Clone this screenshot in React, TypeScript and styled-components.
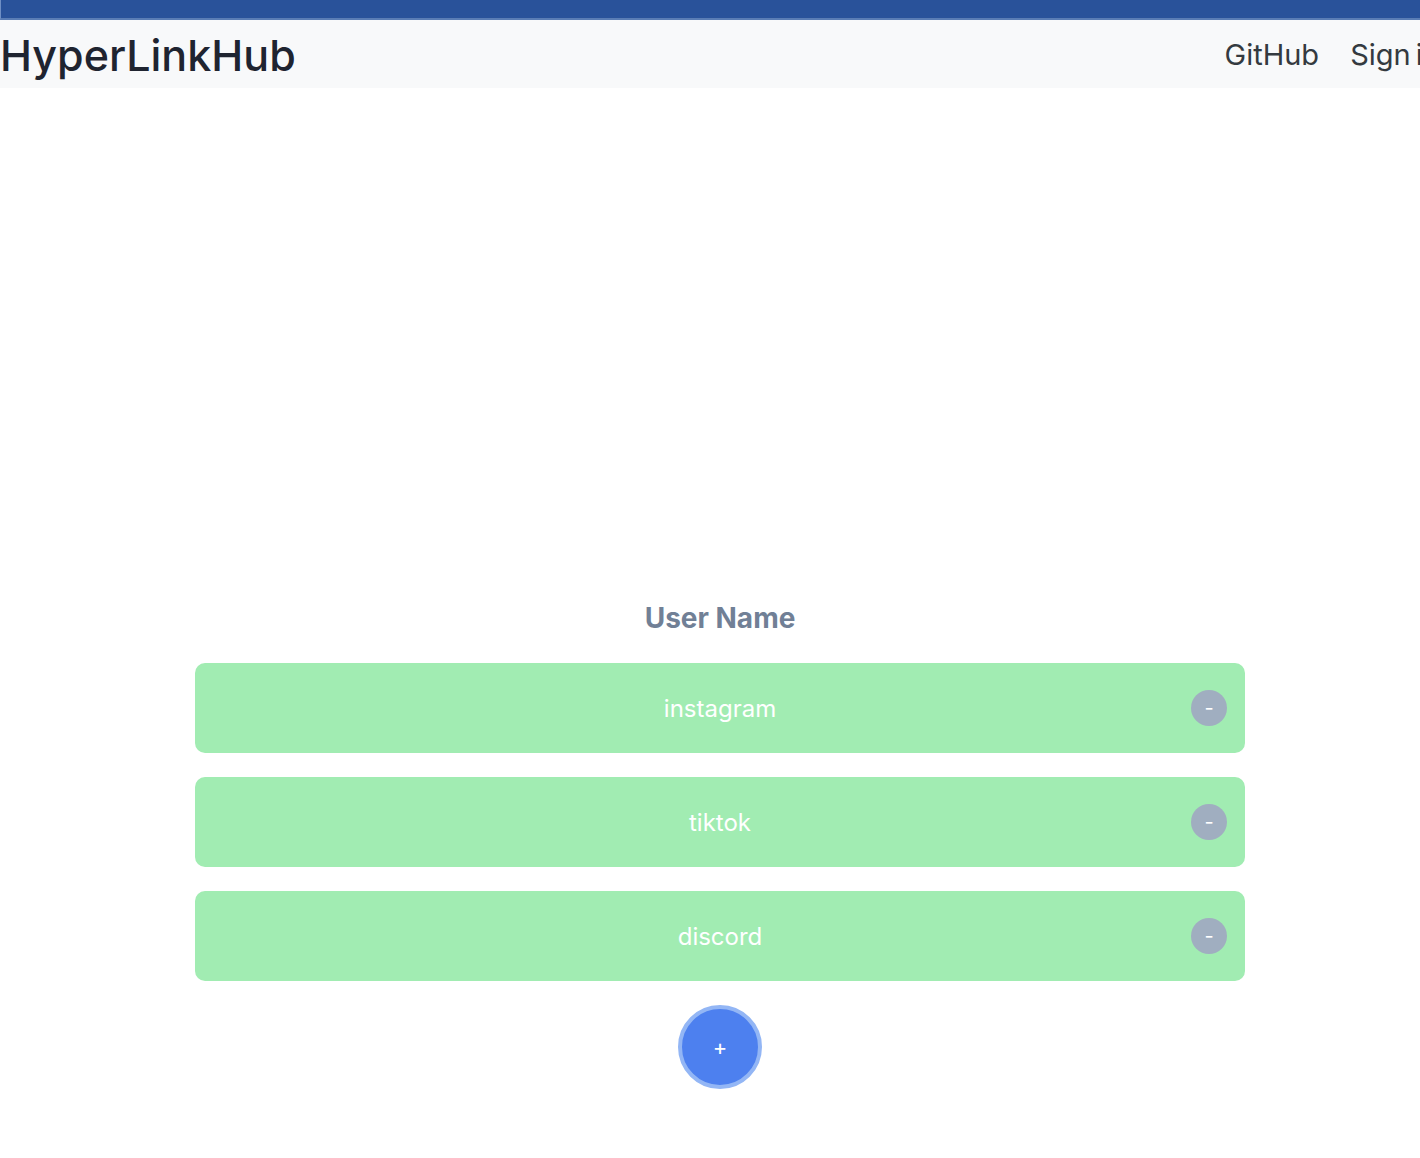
import React from "react";
import styled, { createGlobalStyle } from "styled-components";

const GlobalStyle = createGlobalStyle`
  html, body {
    margin: 0;
    padding: 0;
    background: #ffffff;
    overflow-x: hidden;
  }
  body {
    font-family: Inter, "Noto Sans", "Liberation Sans", sans-serif;
  }
  * { box-sizing: border-box; }
`;

const Page = styled.div`
  width: 1440px;
  min-height: 1158px;
  display: flex;
  flex-direction: column;
`;

const TopStrip = styled.div`
  height: 20px;
  background: #29529a;
  border-bottom: 2px solid #5a7db5;
  border-left: 1px solid #6f8fc4;
`;

const NavBar = styled.nav`
  height: 68px;
  background: #f8f9fa;
  display: flex;
  align-items: center;
  justify-content: space-between;
`;

const Brand = styled.a`
  font-size: 43px;
  font-weight: 500;
  color: #1f2430;
  text-decoration: none;
  line-height: 1;
  margin-top: 2px;
  white-space: nowrap;
`;

const NavLinks = styled.div`
  display: flex;
  align-items: center;
  gap: 31px;
  margin-right: 0;
  flex-shrink: 0;
`;

const NavLink = styled.a`
  font-size: 29px;
  color: #343a40;
  text-decoration: none;
  line-height: 1;
  white-space: nowrap;
  word-spacing: -3px;
  flex-shrink: 0;
`;

const Main = styled.main`
  display: flex;
  flex-direction: column;
  align-items: center;
  padding-top: 513px;
`;

const UserName = styled.h2`
  margin: 0 0 28px;
  font-size: 28px;
  font-weight: 700;
  color: #718096;
  line-height: 34px;
`;

const LinkList = styled.div`
  display: flex;
  flex-direction: column;
  gap: 24px;
  width: 1050px;
`;

const LinkCard = styled.div`
  position: relative;
  height: 90px;
  border-radius: 10px;
  background: #a1ecb2;
  display: flex;
  align-items: center;
  justify-content: center;
`;

const LinkLabel = styled.span`
  font-size: 24px;
  color: #ffffff;
`;

const RemoveButton = styled.button`
  position: absolute;
  right: 18px;
  top: 50%;
  transform: translateY(-50%);
  width: 36px;
  height: 36px;
  border-radius: 50%;
  border: none;
  background: #a0aec0;
  color: #ffffff;
  font-family: inherit;
  font-size: 20px;
  line-height: 1;
  padding: 0 0 1px;
  display: flex;
  align-items: center;
  justify-content: center;
  cursor: pointer;
`;

const AddButton = styled.button`
  margin-top: 24px;
  width: 84px;
  height: 84px;
  border-radius: 50%;
  border: 4px solid #93b6f5;
  background: #4d80ef;
  color: #ffffff;
  font-family: inherit;
  font-size: 22px;
  line-height: 1;
  display: flex;
  align-items: center;
  justify-content: center;
  padding: 0;
  cursor: pointer;
`;

const links = ["instagram", "tiktok", "discord"];

export default function App() {
  return (
    <Page>
      <GlobalStyle />
      <TopStrip />
      <NavBar>
        <Brand href="#">HyperLinkHub</Brand>
        <NavLinks>
          <NavLink href="#">GitHub</NavLink>
          <NavLink href="#">Sign in</NavLink>
        </NavLinks>
      </NavBar>
      <Main>
        <UserName>User Name</UserName>
        <LinkList>
          {links.map((l) => (
            <LinkCard key={l}>
              <LinkLabel>{l}</LinkLabel>
              <RemoveButton>-</RemoveButton>
            </LinkCard>
          ))}
        </LinkList>
        <AddButton>+</AddButton>
      </Main>
    </Page>
  );
}
